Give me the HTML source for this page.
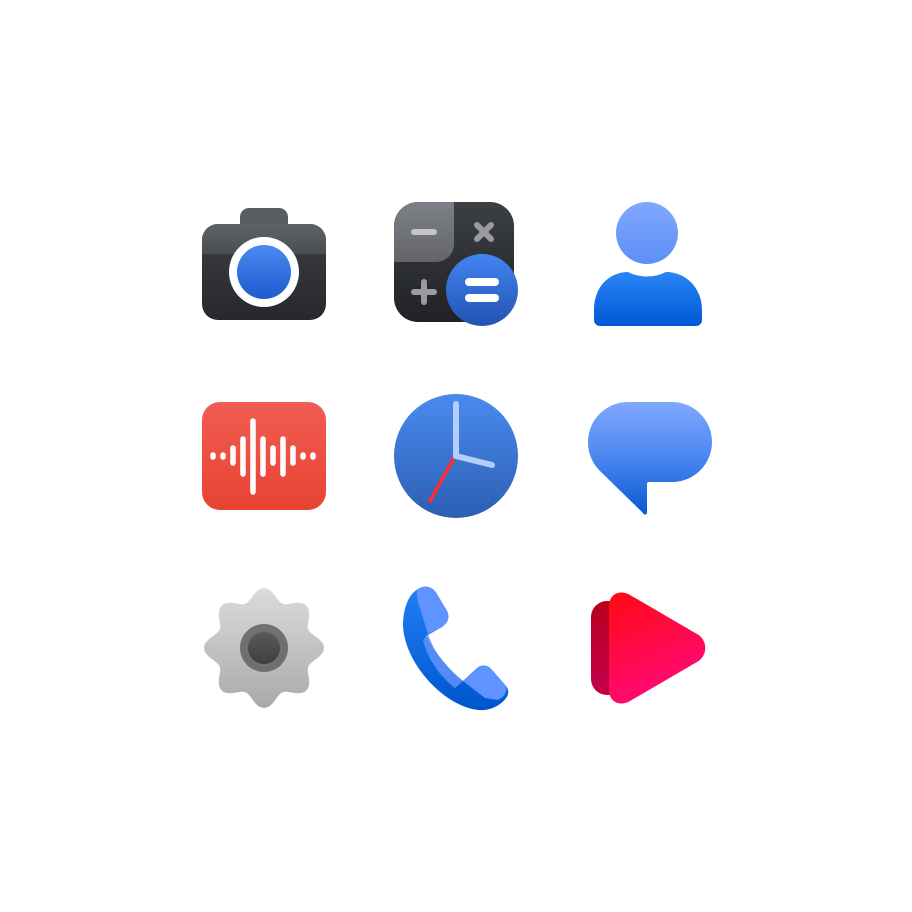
<!DOCTYPE html>
<html><head><style>html,body{margin:0;padding:0;background:#fff;width:912px;height:912px;overflow:hidden}</style></head>
<body>
<svg width="912" height="912" viewBox="0 0 912 912" xmlns="http://www.w3.org/2000/svg">
<defs>
<linearGradient id="camTop" x1="0" y1="0" x2="0" y2="1"><stop offset="0" stop-color="#5f6368"/><stop offset="1" stop-color="#4a4d52"/></linearGradient>
<linearGradient id="camBot" x1="0" y1="0" x2="0" y2="1"><stop offset="0" stop-color="#3c3e42"/><stop offset="1" stop-color="#26282b"/></linearGradient>
<linearGradient id="blueLens" x1="0" y1="0" x2="0" y2="1"><stop offset="0" stop-color="#4a8af0"/><stop offset="1" stop-color="#1e5ad0"/></linearGradient>
<linearGradient id="calcBg" x1="0" y1="0" x2="0" y2="1"><stop offset="0" stop-color="#3c3f43"/><stop offset="1" stop-color="#202225"/></linearGradient>
<linearGradient id="calcTL" x1="0" y1="0" x2="0" y2="1"><stop offset="0" stop-color="#7e8087"/><stop offset="1" stop-color="#63656b"/></linearGradient>
<linearGradient id="calcEq" x1="0" y1="0" x2="0" y2="1"><stop offset="0" stop-color="#4285f4"/><stop offset="1" stop-color="#2452b0"/></linearGradient>
<linearGradient id="head" x1="0" y1="0" x2="0" y2="1"><stop offset="0" stop-color="#80a8ff"/><stop offset="1" stop-color="#5d8ff5"/></linearGradient>
<linearGradient id="body" x1="0" y1="0" x2="0" y2="1"><stop offset="0" stop-color="#2a85f5"/><stop offset="1" stop-color="#0058d6"/></linearGradient>
<linearGradient id="rec" x1="0" y1="0" x2="0" y2="1"><stop offset="0" stop-color="#f25c52"/><stop offset="1" stop-color="#e84333"/></linearGradient>
<linearGradient id="clk" x1="0" y1="0" x2="0" y2="1"><stop offset="0" stop-color="#4a8af0"/><stop offset="1" stop-color="#2c5fb2"/></linearGradient>
<linearGradient id="msg" x1="0" y1="0" x2="0" y2="1"><stop offset="0" stop-color="#80a8ff"/><stop offset="0.5" stop-color="#4a86f0"/><stop offset="1" stop-color="#0a58d0"/></linearGradient>
<linearGradient id="gear" x1="0" y1="0" x2="0" y2="1"><stop offset="0" stop-color="#dcdcdc"/><stop offset="1" stop-color="#a9a9a9"/></linearGradient>
<linearGradient id="gearIn" x1="0" y1="0" x2="0" y2="1"><stop offset="0" stop-color="#5a5a5a"/><stop offset="1" stop-color="#3e3e3e"/></linearGradient>
<linearGradient id="ph" x1="0" y1="0" x2="0" y2="1"><stop offset="0" stop-color="#2080f5"/><stop offset="1" stop-color="#0055cc"/></linearGradient>
<linearGradient id="play" x1="0" y1="0" x2="0.4" y2="1"><stop offset="0" stop-color="#ff0a10"/><stop offset="1" stop-color="#ff0a78"/></linearGradient>
<linearGradient id="playB" x1="0" y1="0" x2="0" y2="1"><stop offset="0" stop-color="#b8001e"/><stop offset="1" stop-color="#c4004c"/></linearGradient>
<clipPath id="calcClip"><rect x="394" y="202" width="120" height="120" rx="24"/></clipPath>
</defs>

<!-- Camera -->
<rect x="240" y="208" width="48" height="30" rx="9" fill="#5a5d62"/>
<rect x="202" y="224" width="124" height="96" rx="16" fill="url(#camBot)"/>
<path d="M218 224 H310 A16 16 0 0 1 326 240 V254 H202 V240 A16 16 0 0 1 218 224Z" fill="url(#camTop)"/>
<circle cx="264" cy="272" r="35" fill="#fff"/>
<circle cx="264" cy="272" r="27" fill="url(#blueLens)"/>

<!-- Calculator -->
<g clip-path="url(#calcClip)">
<rect x="394" y="202" width="120" height="120" fill="url(#calcBg)"/>
<path d="M394 202 H454 V244 A18 18 0 0 1 436 262 H394Z" fill="url(#calcTL)"/>
</g>
<line x1="414" y1="232" x2="434" y2="232" stroke="#c4c5c8" stroke-width="6" stroke-linecap="round"/>
<line x1="477" y1="225" x2="491" y2="239" stroke="#9a9ba0" stroke-width="6" stroke-linecap="round"/>
<line x1="491" y1="225" x2="477" y2="239" stroke="#9a9ba0" stroke-width="6" stroke-linecap="round"/>
<line x1="414" y1="292" x2="434" y2="292" stroke="#9a9ba0" stroke-width="6" stroke-linecap="round"/>
<line x1="424" y1="282" x2="424" y2="302" stroke="#9a9ba0" stroke-width="6" stroke-linecap="round"/>
<circle cx="482" cy="290" r="36" fill="url(#calcEq)"/>
<line x1="469" y1="282" x2="495" y2="282" stroke="#fff" stroke-width="8" stroke-linecap="round"/>
<line x1="469" y1="298" x2="495" y2="298" stroke="#fff" stroke-width="8" stroke-linecap="round"/>

<!-- Person -->
<circle cx="647" cy="233" r="31" fill="url(#head)"/>
<path d="M594 320 V310 C594 286 610 272 628 272 C640 278 654 278 666 272 C686 272 702 288 702 310 V320 A6 6 0 0 1 696 326 H600 A6 6 0 0 1 594 320Z" fill="url(#body)"/>

<!-- Recorder -->
<rect x="202" y="402" width="124" height="108" rx="18" fill="url(#rec)"/>
<g stroke="#fff" stroke-width="5.5" stroke-linecap="round">
<line x1="213" y1="455" x2="213" y2="457"/>
<line x1="223" y1="455" x2="223" y2="457"/>
<line x1="233" y1="448" x2="233" y2="463"/>
<line x1="243" y1="439" x2="243" y2="474"/>
<line x1="253" y1="421" x2="253" y2="492"/>
<line x1="263" y1="439" x2="263" y2="474"/>
<line x1="273" y1="448" x2="273" y2="463"/>
<line x1="283" y1="439" x2="283" y2="474"/>
<line x1="293" y1="448" x2="293" y2="463"/>
<line x1="303" y1="455" x2="303" y2="457"/>
<line x1="313" y1="455" x2="313" y2="457"/>
</g>

<!-- Clock -->
<circle cx="456" cy="456" r="62" fill="url(#clk)"/>
<line x1="455" y1="456" x2="430" y2="501" stroke="#ff2d2d" stroke-width="3.5" stroke-linecap="round"/>
<line x1="456" y1="456" x2="456" y2="404" stroke="#b3cefc" stroke-width="6" stroke-linecap="round"/>
<line x1="456" y1="456" x2="492" y2="465" stroke="#b3cefc" stroke-width="6" stroke-linecap="round"/>

<!-- Message -->
<path d="M628 402 H672 A40 40 0 0 1 672 482 H649 A2 2 0 0 0 647 484 V512 A2 2 0 0 1 643 513 L600 471 A40 40 0 0 1 588 442 A40 40 0 0 1 628 402Z" fill="url(#msg)"/>

<!-- Gear -->
<path id="g" fill="url(#gear)" d=""/>
<circle cx="264" cy="648" r="24" fill="#707070"/>
<circle cx="264" cy="648" r="16" fill="url(#gearIn)"/>

<!-- Phone -->
<path d="M420 588 C410 592 403 606 403 626 C405 664 444 706 478 710 C490 711 500 706 506 698 C509 694 509 690 506 686 L492 670 C488 665 482 664 477 668 L463 681 C448 669 436 654 426 636 L442 627 C448 623 450 617 447 611 L437 594 C433 587 426 585 420 588Z" fill="url(#ph)"/>
<path d="M420 588 C415 590 417 596 418 602 L428 634 L442 627 C448 623 450 617 447 611 L437 594 C433 587 426 585 420 588Z" fill="#5f93ff"/>
<path d="M463 681 L485 698 L498 700 C502 698 508 694 506 686 L492 670 C488 665 482 664 477 668Z" fill="#5f93ff"/>
<path d="M423 640 L428 634 C434 652 446 668 463 681 L455 688 C440 676 428 660 423 640Z" fill="#5f93ff" opacity="0.85"/>

<!-- Play -->
<rect x="591" y="601" width="34" height="94" rx="16" fill="url(#playB)"/>
<path d="M609 606 C609 594 620 589 630 595 L697 634 C708 640 708 656 697 662 L630 701 C620 707 609 702 609 690Z" fill="url(#play)"/>
</svg>
<script>
(function(){var cx=264,cy=648,d="",n=8,N=160;for(var i=0;i<=N;i++){var t=i/N*2*Math.PI;var r=54+6*Math.cos(n*t);var a=t-Math.PI/2;var x=cx+r*Math.cos(a),y=cy+r*Math.sin(a);d+=(i?"L":"M")+x.toFixed(2)+" "+y.toFixed(2);}document.getElementById("g").setAttribute("d",d+"Z");})();
</script>
</body></html>
